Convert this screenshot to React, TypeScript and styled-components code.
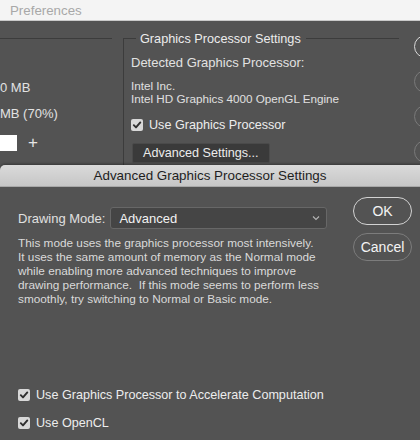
import React from "react"
import styled, { createGlobalStyle } from "styled-components"

const GlobalStyle = createGlobalStyle`
  html, body {
    margin: 0;
    padding: 0;
    background: #535353;
    overflow: hidden;
  }
  body {
    font-family: "Liberation Sans", Arial, sans-serif;
    -webkit-font-smoothing: antialiased;
  }
`

const Check = () => (
  <CheckBox>
    <svg width="10" height="10" viewBox="0 0 10 10">
      <polyline points="1.8,5.2 4,7.4 8.3,2.4" fill="none" stroke="#2e2e2e" strokeWidth="1.9" strokeLinecap="round" strokeLinejoin="round" />
    </svg>
  </CheckBox>
)

const App = () => {
  return (
    <>
      <GlobalStyle />
      <Window>
        <TitleBar>Preferences</TitleBar>
        <Body>
          <LeftPane>
            <GroupHeader>
              <Rule />
            </GroupHeader>
            <LeftText $top={34}>0 MB</LeftText>
            <LeftText $top={10}>MB (70%)</LeftText>
            <InputRow>
              <MemoryInput />
              <Plus>+</Plus>
            </InputRow>
          </LeftPane>

          <GroupBox>
            <GroupHeader>
              <Rule $width={13} />
              <GroupTitle>Graphics Processor Settings</GroupTitle>
              <Rule />
            </GroupHeader>
            <GroupContent>
              <Label>Detected Graphics Processor:</Label>
              <GpuInfo>
                <div>Intel Inc.</div>
                <div>Intel HD Graphics 4000 OpenGL Engine</div>
              </GpuInfo>
              <CheckRow $top={12}>
                <Check />
                <span>Use Graphics Processor</span>
              </CheckRow>
              <DarkButton>Advanced Settings...</DarkButton>
            </GroupContent>
          </GroupBox>

          <SideButtons>
            <PillStub $primary />
            <PillStub />
            <PillStub />
            <PillStub />
          </SideButtons>
        </Body>

        <Sheet>
          <SheetHeader>Advanced Graphics Processor Settings</SheetHeader>
          <SheetBody>
            <SheetMain>
              <ModeRow>
                <ModeLabel>Drawing Mode:</ModeLabel>
                <Select>
                  <span>Advanced</span>
                  <svg width="8" height="6" viewBox="0 0 8 6">
                    <polyline points="1,1.5 4,4.5 7,1.5" fill="none" stroke="#b4b4b4" strokeWidth="1.1" />
                  </svg>
                </Select>
              </ModeRow>
              <Description>
                This mode uses the graphics processor most intensively.
                <br />
                It uses the same amount of memory as the Normal mode
                <br />
                while enabling more advanced techniques to improve
                <br />
                drawing performance.&nbsp; If this mode seems to perform less
                <br />
                smoothly, try switching to Normal or Basic mode.
              </Description>
              <Options>
                <CheckRow $top={0}>
                  <Check />
                  <span>Use Graphics Processor to Accelerate Computation</span>
                </CheckRow>
                <CheckRow $top={12}>
                  <Check />
                  <span>Use OpenCL</span>
                </CheckRow>
              </Options>
            </SheetMain>
            <SheetActions>
              <PillButton $primary>OK</PillButton>
              <PillButton>Cancel</PillButton>
            </SheetActions>
          </SheetBody>
        </Sheet>
      </Window>
    </>
  )
}

export default App

const Window = styled.div`
  position: relative;
  width: 420px;
  height: 440px;
  overflow: hidden;
  background: #535353;
`

const TitleBar = styled.div`
  height: 20px;
  line-height: 21px;
  padding-left: 10px;
  background: #f4f4f4;
  border-bottom: 1px solid #c9c9c9;
  color: #a8a8a8;
  font-size: 13.3px;
`

const Body = styled.div`
  display: flex;
  padding-top: 10px;
  height: 200px;
`

const LeftPane = styled.div`
  width: 112px;
  flex-shrink: 0;
  margin-right: 11px;
  display: flex;
  flex-direction: column;
`

const LeftText = styled.div<{ $top: number }>`
  margin-top: ${p => p.$top}px;
  font-size: 13px;
  line-height: 16px;
  color: #e2e2e2;
`

const InputRow = styled.div`
  display: flex;
  align-items: center;
  margin-top: 13px;
`

const MemoryInput = styled.div`
  width: 17px;
  height: 16px;
  background: #ffffff;
`

const Plus = styled.span`
  margin-left: 11px;
  font-size: 17px;
  line-height: 16px;
  color: #e6e6e6;
`

const GroupBox = styled.div`
  width: 276px;
  flex-shrink: 0;
  display: flex;
  flex-direction: column;
`

const GroupHeader = styled.div`
  display: flex;
  align-items: center;
  height: 15px;
`

const Rule = styled.div<{ $width?: number }>`
  height: 1px;
  background: #3c3c3c;
  ${p => (p.$width ? `width: ${p.$width}px; flex-shrink: 0;` : "flex: 1;")}
`

const GroupTitle = styled.span`
  padding: 0 5px 0 4px;
  font-size: 12.7px;
  color: #ececec;
  white-space: nowrap;
`

const GroupContent = styled.div`
  margin-top: -7px;
  padding: 16px 0 0 7px;
  border-left: 1px solid #3c3c3c;
  flex: 1;
`

const Label = styled.div`
  font-size: 13px;
  line-height: 16px;
  color: #e2e2e2;
`

const GpuInfo = styled.div`
  margin-top: 8px;
  font-size: 11.7px;
  line-height: 13px;
  color: #e0e0e0;
`

const CheckRow = styled.div<{ $top: number }>`
  display: flex;
  align-items: center;
  gap: 6px;
  margin-top: ${p => p.$top}px;
  font-size: 12.6px;
  line-height: 16px;
  color: #ededed;
  white-space: nowrap;
`

const CheckBox = styled.span`
  display: flex;
  align-items: center;
  justify-content: center;
  width: 12px;
  height: 12px;
  border-radius: 2px;
  background: #d8d8d8;
  flex-shrink: 0;
`

const DarkButton = styled.div`
  display: inline-block;
  margin-top: 10px;
  margin-left: 1px;
  height: 18px;
  line-height: 18px;
  padding: 0 10px;
  background: #3a3a3a;
  border: 1px solid #4a4a4a;
  border-radius: 2px;
  font-size: 12.6px;
  color: #ececec;
`

const SideButtons = styled.div`
  margin-left: 15px;
  width: 70px;
  flex-shrink: 0;
  display: flex;
  flex-direction: column;
  gap: 12px;
  padding-top: 4px;
`

const PillStub = styled.div<{ $primary?: boolean }>`
  height: 21px;
  border-radius: 12px;
  border: 1px solid ${p => (p.$primary ? "#d8d8d8" : "#7a7a7a")};
`

const Sheet = styled.div`
  position: absolute;
  top: 165px;
  left: 0;
  right: -10px;
  bottom: 0;
  background: #535353;
  border-radius: 5px 5px 0 0;
  box-shadow: 0 -1px 3px rgba(0, 0, 0, 0.35);
  display: flex;
  flex-direction: column;
`

const SheetHeader = styled.div`
  height: 21px;
  line-height: 21px;
  padding-right: 10px;
  text-align: center;
  border-radius: 5px 5px 0 0;
  background: linear-gradient(#dadada, #c6c6c6);
  border-bottom: 1px solid #a8a8a8;
  font-size: 13.4px;
  color: #1e1e1e;
`

const SheetBody = styled.div`
  display: grid;
  grid-template-columns: 309px 59px;
  column-gap: 26px;
  padding: 10px 0 0 18px;
`

const SheetMain = styled.div`
  display: flex;
  flex-direction: column;
  padding-top: 10px;
`

const ModeRow = styled.div`
  display: flex;
  align-items: center;
  gap: 5px;
`

const ModeLabel = styled.span`
  font-size: 13px;
  color: #e0e0e0;
  white-space: nowrap;
`

const Select = styled.div`
  flex: 1;
  height: 20px;
  display: flex;
  align-items: center;
  justify-content: space-between;
  padding: 0 6px 0 8px;
  background: #454545;
  border: 1px solid #676767;
  border-radius: 3px;
  font-size: 13px;
  color: #f2f2f2;
`

const Description = styled.p`
  margin: 7px 0 0;
  font-size: 11.8px;
  line-height: 14px;
  color: #dadada;
  white-space: nowrap;
`

const Options = styled.div`
  margin-top: 81px;
`

const SheetActions = styled.div`
  display: flex;
  flex-direction: column;
  gap: 8px;
`

const PillButton = styled.div<{ $primary?: boolean }>`
  height: 26px;
  line-height: 26px;
  text-align: center;
  border-radius: 14px;
  border: 1px solid ${p => (p.$primary ? "#d2d2d2" : "#7c7c7c")};
  font-size: 14px;
  color: #f4f4f4;
`
